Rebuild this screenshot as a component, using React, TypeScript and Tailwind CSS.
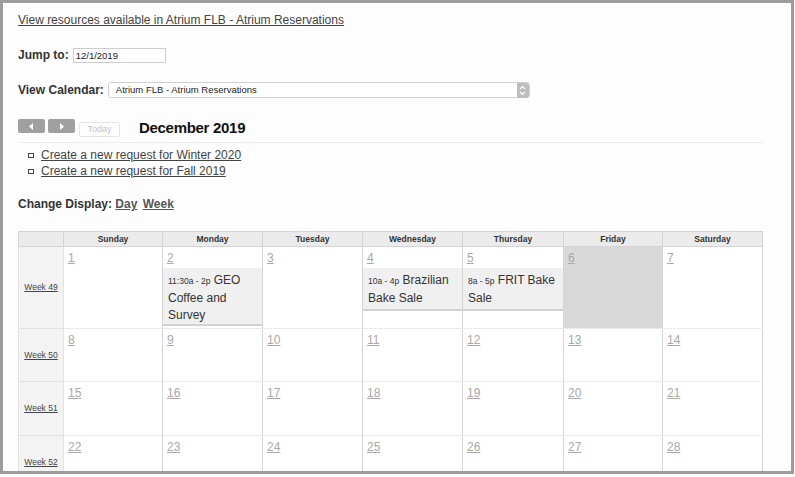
import React from 'react';

const FONT = { fontFamily: '"Liberation Sans", Arial, Helvetica, sans-serif' };

type Ev = { time: string; title: string; h: string };

const weeks: { label: string; h: string; days: number[] }[] = [
  { label: 'Week 49', h: 'h-[82px]', days: [1, 2, 3, 4, 5, 6, 7] },
  { label: 'Week 50', h: 'h-[53px]', days: [8, 9, 10, 11, 12, 13, 14] },
  { label: 'Week 51', h: 'h-[54px]', days: [15, 16, 17, 18, 19, 20, 21] },
  { label: 'Week 52', h: 'h-[54px]', days: [22, 23, 24, 25, 26, 27, 28] },
];

const events: Record<number, Ev> = {
  2: { time: '11:30a - 2p', title: 'GEO Coffee and Survey', h: 'h-[58px]' },
  4: { time: '10a - 4p', title: 'Brazilian Bake Sale', h: 'h-[43px]' },
  5: { time: '8a - 5p', title: 'FRIT Bake Sale', h: 'h-[43px]' },
};

const dayNames = ['Sunday', 'Monday', 'Tuesday', 'Wednesday', 'Thursday', 'Friday', 'Saturday'];

function DayCell({ day }: { day: number }) {
  const ev = events[day];
  const today = day === 6;
  return (
    <td className={`align-top p-0 border-x border-[#d4d4d4] border-y border-y-[#ebebeb] ${today ? 'bg-[#d9d9d9]' : 'bg-white'}`}>
      <div className="flex flex-col">
        <div className="h-[21px] px-[4px] pt-[4px] text-[12px] leading-[15px]">
          <a href="#" className="text-[#a8a8a8] underline">{day}</a>
        </div>
        {ev && (
          <div className={`${ev.h} bg-[#f0f0f0] border-b-2 border-[#d2d2d2] px-[5px] pt-[4px] text-[12px] leading-[17px] text-[#333]`}>
            <span className="text-[8.5px]">{ev.time}</span> {ev.title}
          </div>
        )}
      </div>
    </td>
  );
}

export default function App() {
  return (
    <div style={FONT} className="w-[794px] h-[474px] border-[3px] border-[#9c9c9c] bg-[#fdfdfd] overflow-hidden text-[#333]">
      <div className="pl-[15px] pr-[28px] pt-[10px]">
        {/* Resource link */}
        <div className="text-[12px] leading-[15px]">
          <a href="#" className="text-[#444] underline">
            View resources available in Atrium FLB - Atrium Reservations
          </a>
        </div>

        {/* Jump to */}
        <div className="flex items-center gap-[4px] mt-[19px] h-[16px]">
          <span className="text-[12px] font-bold">Jump to:</span>
          <div className="w-[93px] h-[15px] border border-[#ccc] bg-white text-[9.5px] leading-[13px] pl-[2px] text-[#222]">12/1/2019</div>
        </div>

        {/* View calendar */}
        <div className="flex items-center gap-[4px] mt-[19px] h-[16px]">
          <span className="text-[12px] font-bold">View Calendar:</span>
          <div className="w-[422px] h-[16px] border border-[#d0d0d0] rounded-[3px] bg-white flex items-center justify-between">
            <span className="text-[9.5px] pl-[7px] text-[#222]">Atrium FLB - Atrium Reservations</span>
            <div className="w-[12px] h-[15px] bg-[#bdbdbd] rounded-r-[3px] flex items-center justify-center">
              <svg width="7" height="11" viewBox="0 0 7 11" fill="none" stroke="#fff" strokeWidth="1.2">
                <path d="M1 4 L3.5 1.5 L6 4" />
                <path d="M1 7 L3.5 9.5 L6 7" />
              </svg>
            </div>
          </div>
        </div>

        {/* Month nav */}
        <div className="flex items-start mt-[21px] h-[19px]">
          <button className="w-[27px] h-[14px] bg-[#a0a0a0] rounded-[2px] flex items-center justify-center">
            <svg width="5" height="7" viewBox="0 0 5 7"><path d="M4 0 L0 3.5 L4 7 Z" fill="#fff" /></svg>
          </button>
          <button className="ml-[3px] w-[27px] h-[14px] bg-[#a0a0a0] rounded-[2px] flex items-center justify-center">
            <svg width="5" height="7" viewBox="0 0 5 7"><path d="M1 0 L5 3.5 L1 7 Z" fill="#fff" /></svg>
          </button>
          <button className="ml-[4px] mt-[3px] w-[41px] h-[15px] border border-[#e4e4e4] rounded-[2px] bg-white text-[9px] text-[#c4c4c4] leading-[13px]">
            Today
          </button>
          <h2 className="ml-[19px] text-[15px] leading-[18px] font-bold text-[#111] tracking-[-0.3px]">December 2019</h2>
        </div>
        <div className="mt-[4px] h-px bg-[#ececec]" />

        {/* Request links */}
        <ul className="mt-[4px] pl-[10px] text-[12px] leading-[16px]">
          {['Create a new request for Winter 2020', 'Create a new request for Fall 2019'].map(t => (
            <li key={t} className="flex items-center gap-[7px]">
              <span className="w-[6px] h-[5px] border border-[#444]" />
              <a href="#" className="text-[#444] underline">{t}</a>
            </li>
          ))}
        </ul>

        {/* Display switcher */}
        <div className="mt-[17px] text-[12px] leading-[16px] font-bold">
          Change Display: <a href="#" className="underline text-[#555]">Day</a>{' '}
          <a href="#" className="ml-[2px] underline text-[#555]">Week</a>
        </div>

        {/* Calendar grid */}
        <table className="mt-[19px] w-[745px] table-fixed border-collapse">
          <colgroup>
            <col className="w-[45px]" />
            <col className="w-[99px]" />
            <col className="w-[100px]" />
            <col className="w-[100px]" />
            <col className="w-[100px]" />
            <col className="w-[101px]" />
            <col className="w-[99px]" />
            <col className="w-[100px]" />
          </colgroup>
          <thead>
            <tr className="h-[15px] bg-[#ebebeb]">
              <th className="border border-[#d4d4d4]" />
              {dayNames.map(d => (
                <th key={d} className="border border-[#d4d4d4] text-[8.5px] font-bold text-[#333] leading-[13px]">{d}</th>
              ))}
            </tr>
          </thead>
          <tbody>
            {weeks.map(w => (
              <tr key={w.label} className={w.h}>
                <td className="bg-[#f3f3f3] border border-[#e2e2e2] text-center align-middle p-0 text-[8.5px] leading-[11px]">
                  <a href="#" className="underline text-[#444]">{w.label}</a>
                </td>
                {w.days.map(d => <DayCell key={d} day={d} />)}
              </tr>
            ))}
          </tbody>
        </table>
      </div>
    </div>
  );
}
